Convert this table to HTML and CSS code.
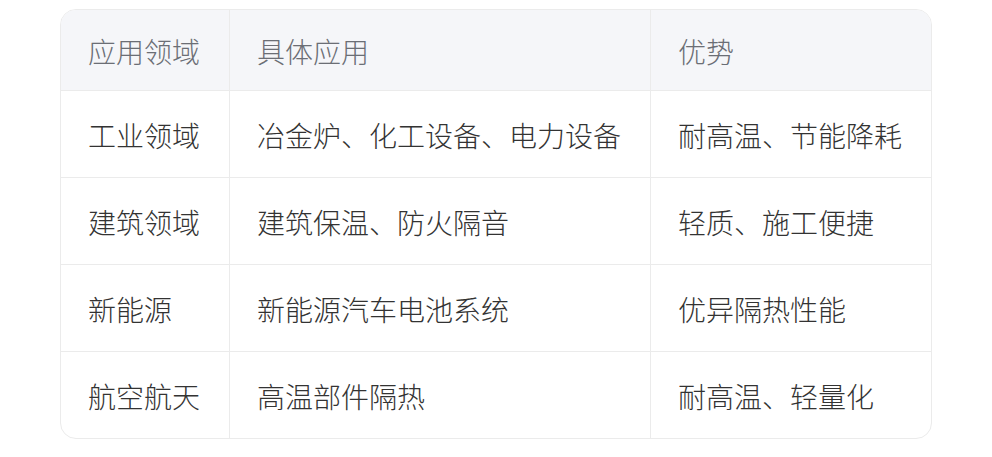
FILE: index.html
```html
<!DOCTYPE html>
<html lang="zh-CN">
<head>
<meta charset="utf-8">
<link rel="stylesheet" href="styles.css">
</head>
<body>
<div class="page">
  <div class="table-wrap">
    <table class="data-table">
      <colgroup>
        <col class="c1"><col class="c2"><col class="c3">
      </colgroup>
      <thead>
        <tr><th>应用领域</th><th>具体应用</th><th>优势</th></tr>
      </thead>
      <tbody>
        <tr><td>工业领域</td><td>冶金炉、化工设备、电力设备</td><td>耐高温、节能降耗</td></tr>
        <tr><td>建筑领域</td><td>建筑保温、防火隔音</td><td>轻质、施工便捷</td></tr>
        <tr><td>新能源</td><td>新能源汽车电池系统</td><td>优异隔热性能</td></tr>
        <tr><td>航空航天</td><td>高温部件隔热</td><td>耐高温、轻量化</td></tr>
      </tbody>
    </table>
  </div>
</div>
</body>
</html>
```

FILE: styles.css
```css
html, body {
  margin: 0;
  padding: 0;
  background: #ffffff;
}
body {
  font-family: "Noto Sans CJK SC", "Noto Sans", sans-serif;
}
.page {
  padding: 9px 0 0 60px;
}
.table-wrap {
  width: 870px;
  border: 1px solid #ebebeb;
  border-radius: 16px;
  overflow: hidden;
}
.data-table {
  width: 100%;
  border-collapse: separate;
  border-spacing: 0;
  table-layout: fixed;
}
.c1 { width: 168px; }
.c2 { width: 421px; }
.c3 { width: 281px; }
.data-table th,
.data-table td {
  text-align: left;
  font-size: 28px;
  font-weight: 300;
  line-height: 40px;
  padding: 0 27px;
  white-space: nowrap;
}
.data-table th + th,
.data-table td + td {
  border-left: 1px solid #ebebeb;
}
.data-table th {
  background: #f5f6f9;
  color: #6b6e75;
  padding-top: 21px;
  padding-bottom: 19px;
  border-bottom: 1px solid #ebebeb;
}
.data-table td {
  color: #333333;
  padding-top: 24px;
  padding-bottom: 22px;
}
.data-table tbody tr + tr td {
  border-top: 1px solid #ebebeb;
}
```
